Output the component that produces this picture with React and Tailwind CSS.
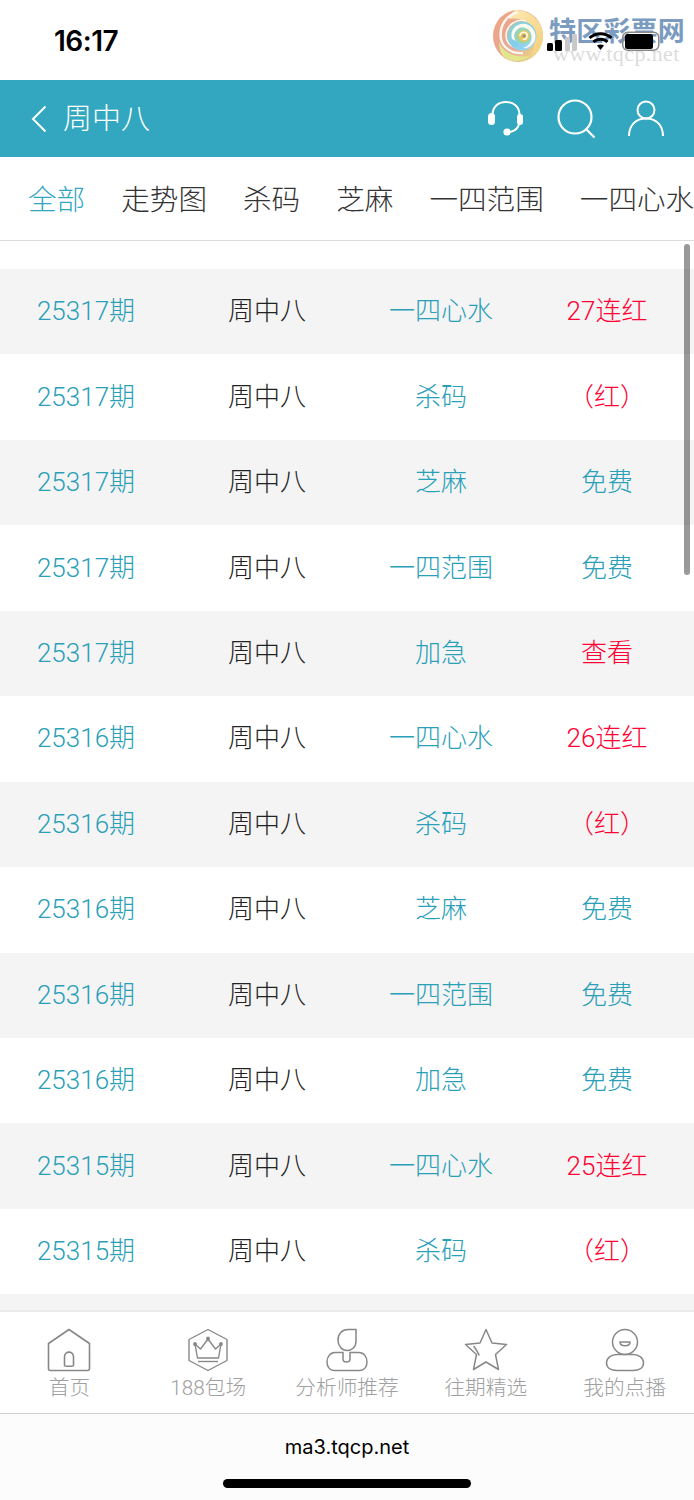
import React from 'react';

const rows = [
  ['25317期', '一四心水', '27连红', 'red'],
  ['25317期', '杀码', '（红）', 'red'],
  ['25317期', '芝麻', '免费', 'teal'],
  ['25317期', '一四范围', '免费', 'teal'],
  ['25317期', '加急', '查看', 'red'],
  ['25316期', '一四心水', '26连红', 'red'],
  ['25316期', '杀码', '（红）', 'red'],
  ['25316期', '芝麻', '免费', 'teal'],
  ['25316期', '一四范围', '免费', 'teal'],
  ['25316期', '加急', '免费', 'teal'],
  ['25315期', '一四心水', '25连红', 'red'],
  ['25315期', '杀码', '（红）', 'red'],
];

const tabs = ['全部', '走势图', '杀码', '芝麻', '一四范围', '一四心水'];

const Logo = () => (
  <svg width="54" height="54" viewBox="0 0 54 54" className="absolute left-[492px] top-[9px]">
    <defs>
      <linearGradient id="outer" x1="0" y1="0.2" x2="0.9" y2="1">
        <stop offset="0" stopColor="#eda583" />
        <stop offset="0.55" stopColor="#e6a998" />
        <stop offset="0.8" stopColor="#e8c98a" />
        <stop offset="1" stopColor="#dbe58e" />
      </linearGradient>
      <linearGradient id="top" x1="0" y1="0" x2="1" y2="1">
        <stop offset="0" stopColor="#fbe9b4" />
        <stop offset="1" stopColor="#f6cf78" />
      </linearGradient>
      <linearGradient id="ring" x1="0" y1="0" x2="1" y2="1">
        <stop offset="0" stopColor="#8fd3c8" />
        <stop offset="0.5" stopColor="#84cdec" />
        <stop offset="1" stopColor="#a5dbf3" />
      </linearGradient>
    </defs>
    <ellipse cx="26" cy="27" rx="25" ry="26" fill="url(#outer)" />
    <path d="M24 1C38 1 51 12 51 27C51 36 46 44 38 48C44 38 44 26 37 18C33 12 28 8 17 10C19 5 21 2 24 1Z" fill="url(#top)" />
    <path d="M7 33C11 44 24 49 38 47C31 53 19 54 11 47C8 43 7 38 7 33Z" fill="#e4e68e" />
    <path d="M26 3C14 6 7 17 9 30C11 39 20 45 31 44" fill="none" stroke="#fdf6ee" strokeWidth="2.4" />
    <path d="M34 12C24 9 15 16 14 26C14 35 22 41 31 39" fill="none" stroke="#fdf6ee" strokeWidth="1.6" />
    <circle cx="30" cy="27" r="14.5" fill="url(#ring)" />
    <path d="M20 30C17 20 26 13 34 15C41 17 45 24 43 31C41 36 36 40 31 39C38 37 41 31 39 25C37 19 30 17 26 20C22 23 21 27 24 32Z" fill="#fdfaf0" />
    <circle cx="31" cy="27" r="8" fill="#9ad5b0" />
    <circle cx="32" cy="27" r="5.6" fill="#efc65a" />
    <path d="M28 27C28 23 33 22 35 25C36 28 34 31 31 30" fill="none" stroke="#fdfaf0" strokeWidth="1.5" />
    <circle cx="32" cy="27" r="1.6" fill="#8b8f7c" />
  </svg>
);

const StatusIcons = () => (
  <div className="absolute left-[547px] top-[31px] flex items-end gap-[9px]">
    <svg width="32" height="20" viewBox="0 0 32 20">
      <rect x="0" y="12" width="6" height="8" rx="1.5" fill="#000" />
      <rect x="8" y="9" width="7" height="11" rx="1.5" fill="#000" />
      <rect x="18" y="6" width="5" height="14" rx="1.5" fill="#c9c9c9" />
      <rect x="25" y="3" width="5" height="17" rx="1.5" fill="#c9c9c9" />
    </svg>
    <svg width="25" height="20" viewBox="0 0 25 20">
      <path d="M1.5 7C7.5 1.2 17.5 1.2 23.5 7" fill="none" stroke="#000" strokeWidth="3" />
      <path d="M5.5 11C9.5 7.3 15.5 7.3 19.5 11" fill="none" stroke="#000" strokeWidth="3" />
      <path d="M9 14.5L12.5 19L16 14.5C14 13 11 13 9 14.5Z" fill="#000" />
    </svg>
    <svg width="38" height="20" viewBox="0 0 38 20">
      <rect x="0.75" y="1.25" width="36" height="18" rx="5" fill="none" stroke="#8a8a8a" strokeWidth="1.5" />
      <rect x="3" y="3" width="28" height="15" rx="2.5" fill="#000" />
    </svg>
  </div>
);

const HeadsetIcon = () => (
  <svg width="38" height="38" viewBox="0 0 38 38" fill="none" stroke="#fff" strokeWidth="2">
    <path d="M5.5 15C5.5 7 11 2 19 2C27 2 32.5 7 32.5 15" />
    <path d="M32 24C31 29 28 31 23 32" />
    <rect x="1" y="13" width="7" height="12" rx="3.5" fill="#fff" stroke="none" />
    <rect x="30" y="14" width="6" height="11" rx="3" fill="#fff" stroke="none" />
    <circle cx="20" cy="32" r="3.6" fill="#fff" stroke="none" />
  </svg>
);

const SearchIcon = () => (
  <svg width="40" height="40" viewBox="0 0 40 40" fill="none" stroke="#fff" strokeWidth="2.2">
    <circle cx="19" cy="18" r="16.5" />
    <path d="M30 30L38.5 38.5" />
  </svg>
);

const UserIcon = () => (
  <svg width="38" height="38" viewBox="0 0 38 38" fill="none" stroke="#fff" strokeWidth="2">
    <circle cx="19" cy="10" r="8.5" />
    <path d="M2 36C2 25 9 18.5 19 18.5C29 18.5 36 25 36 36" />
  </svg>
);

const HomeIcon = () => (
  <svg width="44" height="44" viewBox="0 0 44 44" fill="none" stroke="#888" strokeWidth="1.6">
    <path d="M1.5 15.5L22 1.5L42.5 15.5V40.5C42.5 41.6 41.6 42.5 40.5 42.5H3.5C2.4 42.5 1.5 41.6 1.5 40.5Z" strokeLinejoin="round" />
    <path d="M17.5 37.5V29C17.5 22.5 26.5 22.5 26.5 29V37.5C26.5 38.5 17.5 38.5 17.5 37.5Z" />
  </svg>
);

const CrownIcon = () => (
  <svg width="42" height="44" viewBox="0 0 42 44" fill="none" stroke="#888" strokeWidth="1.4" strokeLinejoin="round">
    <path d="M21 1.5L40 11.5V32.5L21 42.5L2 32.5V11.5Z" />
    <path d="M8 16L13.5 21L21 11L28.5 21L34 16L31.5 30H10.5Z" />
    <path d="M11 33.5H31" />
    <circle cx="21" cy="10.5" r="1.2" fill="#888" />
    <circle cx="8" cy="16" r="1.2" fill="#888" />
    <circle cx="34" cy="16" r="1.2" fill="#888" />
  </svg>
);

const AnalystIcon = () => (
  <svg width="42" height="44" viewBox="0 0 42 44" fill="none" stroke="#888" strokeWidth="1.5">
    <path d="M12 12C12 6 16 1.5 22 1.5H30V13C30 19 26 22.5 21 22.5C16 22.5 12 18 12 12Z" />
    <path d="M9 24.5H17V31C17 35 24 35 24 31V24.5H33C38 24.5 41 29 41 34C41 39 38 42.5 34 42.5H8C4 42.5 1 39 1 34C1 29 4 24.5 9 24.5Z" />
  </svg>
);

const StarIcon = () => (
  <svg width="44" height="44" viewBox="0 0 44 44" fill="none" stroke="#888" strokeWidth="1.5" strokeLinejoin="round">
    <path d="M22 1.5L28 15L42.5 16.5L31.5 26.5L34.5 41.5L22 34L9.5 41.5L12.5 26.5L1.5 16.5L16 15Z" />
    <path d="M10 18.5C11.5 21 13.5 23 15 27" strokeLinecap="round" />
  </svg>
);

const MineIcon = () => (
  <svg width="40" height="44" viewBox="0 0 40 44" fill="none" stroke="#888" strokeWidth="1.5">
    <circle cx="20" cy="14" r="12.5" />
    <path d="M15 14H25C25 19 15 19 15 14Z" />
    <path d="M12 26.5H28C34 26.5 38.5 30 38.5 35C38.5 40 34 42.5 28 42.5H12C6 42.5 1.5 40 1.5 35C1.5 30 6 26.5 12 26.5Z" />
  </svg>
);

const navItems = [
  ['首页', <HomeIcon key="home" />],
  ['188包场', <CrownIcon key="crown" />],
  ['分析师推荐', <AnalystIcon key="analyst" />],
  ['往期精选', <StarIcon key="star" />],
  ['我的点播', <MineIcon key="mine" />],
];

const App = () => {
  return (
    <div className="relative flex flex-col w-[694px] h-[1500px] overflow-hidden bg-white font-light text-[#333] font-['Roboto','Noto_Sans_CJK_SC',sans-serif]">
      <div className="relative h-20 shrink-0 bg-white">
        <span className="absolute left-[54px] top-[24px] text-[28px] leading-[34px] font-semibold text-black font-['Inter',sans-serif] tracking-[-0.5px]">16:17</span>
        <Logo />
        <span className="absolute left-[549px] top-[15px] text-[27px] leading-[34px] font-bold tracking-[0.2px] whitespace-nowrap text-[#7b9cc0]">特区彩票网</span>
        <span className="absolute left-[553px] top-[44px] text-[22px] leading-[20px] tracking-[0.4px] font-normal text-[#dcdcdc] font-['Liberation_Serif',serif]">www.tqcp.net</span>
        <StatusIcons />
      </div>

      <header className="flex items-center h-[77px] shrink-0 bg-[#32a7bf] text-white">
        <svg width="16" height="28" viewBox="0 0 16 28" fill="none" stroke="#fff" strokeWidth="2" className="ml-[31px]">
          <path d="M14.5 1.5L2 14L14.5 26.5" />
        </svg>
        <h1 className="ml-[16px] pt-[3px] text-[29px] font-light">周中八</h1>
        <div className="ml-auto mr-[29px] flex items-center gap-[31px]">
          <HeadsetIcon />
          <SearchIcon />
          <UserIcon />
        </div>
      </header>

      <nav className="flex items-center gap-9 h-[84px] shrink-0 pl-7 pt-[3px] border-b border-[#dcdcdc] overflow-hidden text-[28.6px] text-[#333]">
        {tabs.map((t, i) => (
          <span key={t} className={i === 0 ? 'shrink-0 whitespace-nowrap text-[#32a7bf]' : 'shrink-0 whitespace-nowrap'}>{t}</span>
        ))}
      </nav>

      <main className="relative flex flex-col flex-1 pt-7 overflow-hidden text-[26px]">
        {rows.map((r, i) => (
          <div key={i} className={i % 2 === 0 ? 'grid grid-cols-[172px_190px_158px_174px] items-center h-[85.45px] shrink-0 text-center bg-[#f4f4f4]' : 'grid grid-cols-[172px_190px_158px_174px] items-center h-[85.45px] shrink-0 text-center bg-white'}>
            <span className="text-[#2a9fb8]">{r[0]}</span>
            <span className="text-[#222]">周中八</span>
            <span className="text-[#2a9fb8]">{r[1]}</span>
            <span className={r[3] === 'red' ? 'text-[#ff0033]' : 'text-[#2a9fb8]'}>{r[2]}</span>
          </div>
        ))}
        <div className="flex-1 bg-[#f4f4f4]" />
        <div className="absolute right-[4px] top-[3px] w-[6px] h-[331px] rounded-full bg-black/40" />
      </main>

      <footer className="grid grid-cols-5 h-[104px] shrink-0 pt-[16px] border-t-2 border-b border-t-[#eaeaea] border-b-[#cfcfcf] bg-white">
        {navItems.map(([label, icon]) => (
          <div key={label} className="flex flex-col items-center">
            <div className="h-[44px] flex items-center justify-center">{icon}</div>
            <span className="mt-[1px] text-[20.7px] leading-[30px] font-light text-[#a0a0a0] whitespace-nowrap">{label}</span>
          </div>
        ))}
      </footer>

      <div className="flex flex-col items-center h-[86px] shrink-0 bg-[#fcfcfd]">
        <span className="mt-[21px] text-[20px] leading-[24px] font-normal text-black font-['Inter',sans-serif]">ma3.tqcp.net</span>
        <div className="mt-[20px] w-[248px] h-[9px] rounded-full bg-black" />
      </div>
    </div>
  );
};

export default App;
